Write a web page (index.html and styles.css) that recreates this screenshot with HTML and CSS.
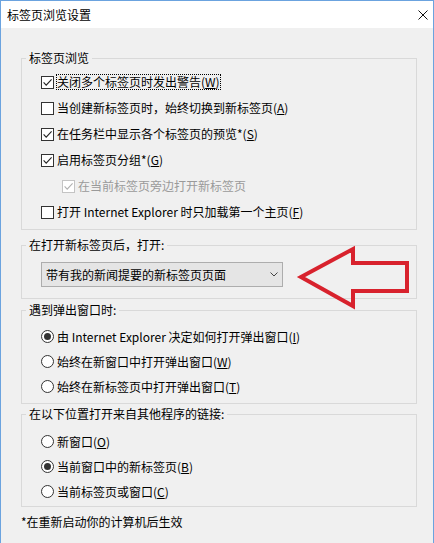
FILE: index.html
```html
<!DOCTYPE html>
<html lang="zh-CN">
<head>
<meta charset="utf-8">
<title>标签页浏览设置</title>
<link rel="stylesheet" href="styles.css">
</head>
<body>
<div class="window">
  <div class="titlebar">
    <span class="title">标签页浏览设置</span>
    <svg class="close" width="10" height="10" viewBox="0 0 10 10"><path d="M0.5 0.5 L9.5 9.5 M9.5 0.5 L0.5 9.5" stroke="#111" stroke-width="1" fill="none"/></svg>
  </div>
  <div class="content">
    <fieldset class="group g1">
      <legend>标签页浏览</legend>
      <div class="row"><span class="check"><svg viewBox="0 0 11 11"><path d="M1.6 5.4 L4.2 8.2 L9.6 2.4"/></svg></span><span class="label focus">关闭多个标签页时发出警告(<u>W</u>)</span></div>
      <div class="row"><span class="check"></span><span class="label">当创建新标签页时，始终切换到新标签页(<u>A</u>)</span></div>
      <div class="row"><span class="check"><svg viewBox="0 0 11 11"><path d="M1.6 5.4 L4.2 8.2 L9.6 2.4"/></svg></span><span class="label">在任务栏中显示各个标签页的预览*(<u>S</u>)</span></div>
      <div class="row"><span class="check"><svg viewBox="0 0 11 11"><path d="M1.6 5.4 L4.2 8.2 L9.6 2.4"/></svg></span><span class="label">启用标签页分组*(<u>G</u>)</span></div>
      <div class="row sub disabled"><span class="check"><svg viewBox="0 0 11 11"><path d="M1.6 5.4 L4.2 8.2 L9.6 2.4"/></svg></span><span class="label">在当前标签页旁边打开新标签页</span></div>
      <div class="row"><span class="check"></span><span class="label">打开 Internet Explorer 时只加载第一个主页(<u>F</u>)</span></div>
    </fieldset>

    <fieldset class="group g2">
      <legend>在打开新标签页后，打开:</legend>
      <div class="select">
        <span>带有我的新闻提要的新标签页页面</span>
        <svg width="8" height="5" viewBox="0 0 8 5"><path d="M0.5 0.5 L4 4 L7.5 0.5" stroke="#444" stroke-width="1" fill="none"/></svg>
      </div>
    </fieldset>

    <fieldset class="group g3">
      <legend>遇到弹出窗口时:</legend>
      <div class="row r25"><span class="radio on"></span><span class="label">由 Internet Explorer 决定如何打开弹出窗口(<u>I</u>)</span></div>
      <div class="row r25"><span class="radio"></span><span class="label">始终在新窗口中打开弹出窗口(<u>W</u>)</span></div>
      <div class="row r25"><span class="radio"></span><span class="label">始终在新标签页中打开弹出窗口(<u>T</u>)</span></div>
    </fieldset>

    <fieldset class="group g4">
      <legend>在以下位置打开来自其他程序的链接:</legend>
      <div class="row r25"><span class="radio"></span><span class="label">新窗口(<u>O</u>)</span></div>
      <div class="row r25"><span class="radio on"></span><span class="label">当前窗口中的新标签页(<u>B</u>)</span></div>
      <div class="row r25"><span class="radio"></span><span class="label">当前标签页或窗口(<u>C</u>)</span></div>
    </fieldset>

    <p class="note">*在重新启动你的计算机后生效</p>
  </div>

  <svg class="arrow" width="434" height="543" viewBox="0 0 434 543">
    <polygon points="301,277 353,249 353,263 407,263 407,291 353,291 353,306" fill="none" stroke="#d8222d" stroke-width="4" stroke-linejoin="miter"/>
  </svg>
</div>
</body>
</html>
```

FILE: styles.css
```css
* { box-sizing: border-box; }

body {
  margin: 0;
  font-family: "Noto Sans CJK SC", "Microsoft YaHei", sans-serif;
  font-size: 12px;
  color: #000;
  background: #f0f0f0;
}

.window {
  position: relative;
  width: 434px;
  height: 543px;
  border: 1px solid #6ba3df;
  border-bottom: none;
  background: #f0f0f0;
  overflow: hidden;
}

.titlebar {
  height: 27px;
  background: #fff;
  display: flex;
  align-items: center;
  justify-content: space-between;
  padding: 0 5px 0 6px;
}

.title {
  line-height: 16px;
}

.close {
  display: block;
  margin-top: 1px;
}

.content {
  padding: 22px 16px 0 20px;
}

.group {
  margin: 0;
  border: 1px solid #d9d9d9;
  padding: 0;
  min-width: 0;
}

.group legend {
  margin-left: 4px;
  padding: 0 3px;
  line-height: 16px;
}

.g1 { padding: 3px 0 4px 0; }
.g2 { margin-top: 7px; padding: 9px 0 11px 0; }
.g3 { margin-top: 3px; padding: 6px 0 4px 0; }
.g4 { margin-top: 2px; padding: 7px 0 2px 0; }

.row {
  display: flex;
  align-items: center;
  gap: 3px;
  height: 26px;
  padding-left: 19px;
}

.row.r25 { height: 25px; }

.row.sub { padding-left: 40px; }

.label {
  line-height: 14px;
  white-space: nowrap;
}

.label u {
  text-decoration-thickness: 1px;
  text-underline-offset: 1px;
}

.focus {
  outline: 1px dotted #000;
  outline-offset: 0;
}

.check {
  width: 13px;
  height: 13px;
  flex: none;
  border: 1px solid #333;
  background: #fff;
  display: flex;
}

.check svg {
  width: 11px;
  height: 11px;
}

.check path {
  fill: none;
  stroke: #222;
  stroke-width: 1.1;
}

.disabled .check {
  border-color: #c4c4c4;
}

.disabled .check path {
  stroke: #b0b0b0;
}

.disabled .label {
  color: #9a9a9a;
}

.radio {
  width: 13px;
  height: 13px;
  flex: none;
  border: 1px solid #333;
  border-radius: 50%;
  background: #fff;
  display: flex;
  align-items: center;
  justify-content: center;
}

.radio.on::after {
  content: "";
  width: 7px;
  height: 7px;
  border-radius: 50%;
  background: #333;
}

.select {
  margin-left: 19px;
  width: 242px;
  height: 25px;
  border: 1px solid #adadad;
  background: #e5e5e5;
  display: flex;
  align-items: center;
  justify-content: space-between;
  padding: 0 4px 0 4px;
  line-height: 16px;
}

.select svg {
  display: block;
  margin-right: 0;
}

.note {
  margin: 7px 0 0 0;
  line-height: 16px;
}

.arrow {
  position: absolute;
  left: -1px;
  top: -1px;
  pointer-events: none;
}
```
